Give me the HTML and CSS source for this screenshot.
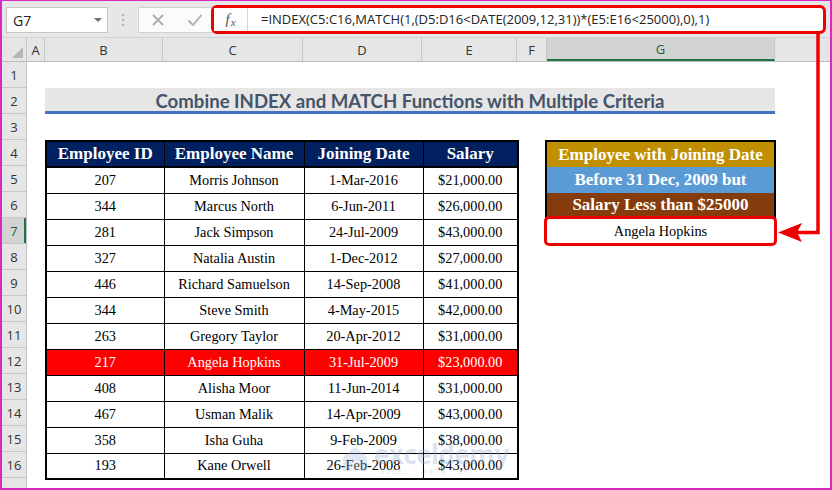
FILE: index.html
```html
<!DOCTYPE html>
<html>
<head>
<meta charset="utf-8">
<link rel="stylesheet" href="styles.css">
</head>
<body>
<div class="app">
  <div class="toolbar">
    <div class="namebox"><span class="ref">G7</span><span class="caret"></span></div>
    <svg class="grip" width="4" height="14" viewBox="0 0 4 14"><circle cx="2" cy="2" r="1.3"/><circle cx="2" cy="7" r="1.3"/><circle cx="2" cy="12" r="1.3"/></svg>
    <div class="btns">
      <svg width="14" height="14" viewBox="0 0 14 14"><path d="M2 2 L12 12 M12 2 L2 12"/></svg>
      <svg width="16" height="14" viewBox="0 0 16 14"><path d="M1.5 7.5 L6 12 L14.5 2"/></svg>
    </div>
    <div class="fgroup">
      <div class="fx"><i>f</i><i class="x">x</i></div>
      <div class="formula">=INDEX(C5:C16,MATCH(1,(D5:D16&lt;DATE(2009,12,31))*(E5:E16&lt;25000),0),1)</div>
    </div>
  </div>

  <div class="colheads">
    <div class="corner"><span class="tri"></span></div>
    <div class="ch">A</div>
    <div class="ch">B</div>
    <div class="ch">C</div>
    <div class="ch">D</div>
    <div class="ch">E</div>
    <div class="ch">F</div>
    <div class="ch sel">G</div>
    <div class="ch last"></div>
  </div>

  <div class="sheet">
    <div class="rownums">
      <div>1</div><div>2</div><div>3</div><div>4</div><div>5</div><div>6</div>
      <div class="sel">7</div><div>8</div><div>9</div><div>10</div><div>11</div><div>12</div>
      <div>13</div><div>14</div><div>15</div><div>16</div><div></div>
    </div>
    <div class="cells">
      <div class="title">Combine INDEX and MATCH Functions with Multiple Criteria</div>

      <table class="data">
        <colgroup><col class="cb"><col class="cc"><col class="cd"><col class="ce"></colgroup>
        <thead>
          <tr><th>Employee ID</th><th>Employee Name</th><th>Joining Date</th><th>Salary</th></tr>
        </thead>
        <tbody>
          <tr><td>207</td><td>Morris Johnson</td><td>1-Mar-2016</td><td>$21,000.00</td></tr>
          <tr><td>344</td><td>Marcus North</td><td>6-Jun-2011</td><td>$26,000.00</td></tr>
          <tr><td>281</td><td>Jack Simpson</td><td>24-Jul-2009</td><td>$43,000.00</td></tr>
          <tr><td>327</td><td>Natalia Austin</td><td>1-Dec-2012</td><td>$27,000.00</td></tr>
          <tr><td>446</td><td>Richard Samuelson</td><td>14-Sep-2008</td><td>$41,000.00</td></tr>
          <tr><td>344</td><td>Steve Smith</td><td>4-May-2015</td><td>$42,000.00</td></tr>
          <tr><td>263</td><td>Gregory Taylor</td><td>20-Apr-2012</td><td>$31,000.00</td></tr>
          <tr class="hit"><td>217</td><td>Angela Hopkins</td><td>31-Jul-2009</td><td>$23,000.00</td></tr>
          <tr><td>408</td><td>Alisha Moor</td><td>11-Jun-2014</td><td>$31,000.00</td></tr>
          <tr><td>467</td><td>Usman Malik</td><td>14-Apr-2009</td><td>$43,000.00</td></tr>
          <tr><td>358</td><td>Isha Guha</td><td>9-Feb-2009</td><td>$38,000.00</td></tr>
          <tr><td>193</td><td>Kane Orwell</td><td>26-Feb-2008</td><td>$43,000.00</td></tr>
        </tbody>
      </table>

      <div class="crit">
        <div class="c1">Employee with Joining Date</div>
        <div class="c2">Before 31 Dec, 2009 but</div>
        <div class="c3">Salary Less than $25000</div>
      </div>
      <div class="result">Angela Hopkins</div>
    </div>
  </div>

  <svg class="arrow" width="832" height="490" viewBox="0 0 832 490">
    <path d="M818 34 L818 232.5 L792 232.5" fill="none" stroke="#ee0000" stroke-width="3.5"/>
    <polygon points="778,232.5 802,223 797,232.5 802,242" fill="#ee0000"/>
  </svg>

  <div class="watermark">
    <svg width="30" height="30" viewBox="0 0 30 30"><path d="M3 14 L15 4 L27 14 L27 28 L3 28 Z" fill="#9db3d6"/><path d="M10 28 L10 18 L20 18 L20 28" fill="#c9d6ea"/></svg>
    <div class="wm-text"><span class="wm-name">exceldemy</span><span class="wm-sub">EXCEL · DATA · BI</span></div>
  </div>
</div>
</body>
</html>
```
FILE: styles.css
```css
* { box-sizing: border-box; }
html, body { margin: 0; padding: 0; background: #fff; }
body { font-family: "Open Sans", "Noto Sans", sans-serif; }

.app {
  position: relative;
  width: 832px;
  height: 490px;
  border: 2px solid #d829c4;
  border-top-width: 1px;
  overflow: hidden;
  background: #fff;
}

/* ---------- toolbar ---------- */
.toolbar {
  height: 37px;
  background: #e7e7e7;
  border-bottom: 1px solid #d2d2d2;
  display: flex;
  align-items: flex-start;
  padding: 6px 0 0 4px;
}
.namebox {
  width: 102px;
  height: 26px;
  background: #fff;
  border: 1px solid #c6c6c6;
  display: flex;
  align-items: center;
  justify-content: space-between;
  padding: 0 5px 0 6px;
}
.ref { font-size: 14px; color: #222; }
.caret {
  width: 0; height: 0;
  border-left: 4px solid transparent;
  border-right: 4px solid transparent;
  border-top: 4px solid #707070;
}
.grip { fill: #b4b4b4; margin: 6px 0 0 13px; }
.btns {
  margin-left: 13px;
  width: 76px;
  height: 26px;
  background: #fbfbfb;
  border: 1px solid #d2d2d2;
  display: flex;
  align-items: center;
  gap: 22px;
  padding-left: 12px;
}
.btns svg path { stroke: #acacac; stroke-width: 1.8; fill: none; }
.fgroup {
  margin: -2px 0 0 -3px;
  width: 615px;
  height: 29px;
  border: 3px solid #ee0000;
  border-radius: 6px;
  background: #fff;
  display: flex;
  align-items: stretch;
}
.fx {
  width: 34px;
  border-right: 1px solid #d4d4d4;
  background: #fdfdfd;
  display: flex;
  align-items: center;
  justify-content: center;
  font-family: "Liberation Serif", serif;
  font-size: 15px;
  color: #555;
}
.fx .x { font-size: 11px; margin-top: 4px; margin-left: 1px; }
.formula {
  flex: 1;
  padding-left: 13px;
  font-size: 13px;
  line-height: 23px;
  color: #222;
  white-space: nowrap;
  overflow: hidden;
}

/* ---------- column headers ---------- */
.colheads {
  display: grid;
  grid-template-columns: 25px 18px 118px 140px 119px 95px 30px 228px 1fr;
  height: 24px;
  background: #e6e6e6;
  border-bottom: 1px solid #bdbdbd;
}
.colheads > div {
  border-right: 1px solid #c6c6c6;
  display: flex;
  align-items: center;
  justify-content: center;
  font-size: 13px;
  color: #333;
}
.corner { position: relative; }
.corner .tri {
  position: absolute;
  right: 3px;
  bottom: 3px;
  width: 0; height: 0;
  border-left: 11px solid transparent;
  border-bottom: 11px solid #b6b6b6;
}
.colheads .sel {
  background: #d3d3d3;
  border-bottom: 2px solid #217346;
  color: #1e5e3a;
}
.colheads .last { border-right: none; }

/* ---------- sheet ---------- */
.sheet {
  display: flex;
  height: 428px;
  overflow: hidden;
}
.rownums {
  width: 25px;
  flex: none;
  background: #e6e6e6;
  border-right: 1px solid #c0c0c0;
}
.rownums > div {
  height: 26px;
  border-bottom: 1px solid #c8c8c8;
  display: flex;
  align-items: center;
  justify-content: center;
  font-size: 13px;
  color: #333;
}
.rownums .sel { background: #d3d3d3; color: #1e5e3a; box-shadow: inset -2px 0 0 #217346; }

.cells {
  flex: 1;
  display: grid;
  grid-template-columns: 18px 118px 140px 119px 95px 30px 228px 1fr;
  grid-template-rows: repeat(17, 26px);
}

.title {
  grid-row: 2;
  grid-column: 2 / 8;
  background: #e7e6e6;
  border-bottom: 3px solid #4472c4;
  display: flex;
  align-items: center;
  justify-content: center;
  font-family: Lato, "Open Sans", sans-serif;
  font-weight: 700;
  font-size: 18.6px;
  color: #44546a;
  padding-top: 2px;
}

/* ---------- data table ---------- */
.data {
  grid-row: 4 / 17;
  grid-column: 2 / 6;
  border-collapse: collapse;
  border: 2px solid #000;
  width: 100%;
  height: 100%;
  table-layout: fixed;
  font-family: "Liberation Serif", serif;
}
.cb { width: 118px; }
.cc { width: 140px; }
.cd { width: 119px; }
.ce { width: 95px; }
.data th, .data td {
  border: 1px solid #000;
  height: 26px;
  padding: 0;
  text-align: center;
  white-space: nowrap;
}
.data th {
  background: #002060;
  color: #fff;
  font-weight: 700;
  font-size: 17px;
  border-bottom-width: 2px;
}
.data td { font-size: 14.3px; color: #000; }
.data tr.hit td { background: #ff0000; color: #fff; }

/* ---------- criteria box ---------- */
.crit {
  grid-row: 4 / 7;
  grid-column: 7;
  border: 2px solid #000;
  border-bottom: none;
  display: grid;
  grid-template-rows: 1fr 1fr 1fr;
  font-family: "Liberation Serif", serif;
  font-weight: 700;
  font-size: 17px;
  color: #fff;
  margin-left: -2px;
  margin-right: -1px;
}
.crit > div { display: flex; align-items: center; justify-content: center; white-space: nowrap; }
.c1 { background: #bf8f00; }
.c2 { background: #5b9bd5; }
.c3 { background: #843c0c; }

.result {
  grid-row: 7;
  grid-column: 7;
  margin: -2px -2px -2px -3px;
  border: 3px solid #ee0000;
  border-radius: 5px;
  display: flex;
  align-items: center;
  justify-content: center;
  font-family: "Liberation Serif", serif;
  font-size: 14.3px;
  color: #000;
  background: #fff;
  position: relative;
}

/* ---------- overlays ---------- */
.arrow {
  position: absolute;
  left: -2px;
  top: -1px;
  pointer-events: none;
}
.watermark {
  position: absolute;
  left: 338px;
  top: 440px;
  display: flex;
  align-items: center;
  gap: 4px;
  opacity: 0.3;
  pointer-events: none;
}
.wm-text { display: flex; flex-direction: column; line-height: 1; }
.wm-name {
  font-family: "Open Sans", sans-serif;
  font-weight: 700;
  font-size: 26px;
  color: #8aa6d2;
  letter-spacing: -0.5px;
}
.wm-sub {
  font-size: 7px;
  letter-spacing: 2px;
  color: #9aa9c0;
  margin-top: 1px;
  padding-left: 6px;
}
```
